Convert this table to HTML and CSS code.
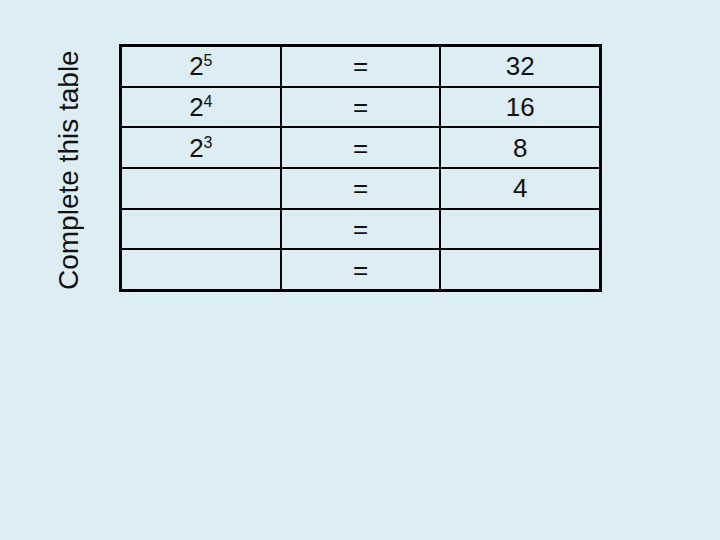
FILE: index.html
```html
<!DOCTYPE html>
<html>
<head>
<meta charset="utf-8">
<link rel="stylesheet" href="styles.css">
</head>
<body>
<div class="slide">
  <div class="label">Complete this table</div>
  <div class="grid">
    <div class="cell"><span>2<span class="sup">5</span></span></div>
    <div class="cell">=</div>
    <div class="cell">32</div>
    <div class="cell"><span>2<span class="sup">4</span></span></div>
    <div class="cell">=</div>
    <div class="cell">16</div>
    <div class="cell"><span>2<span class="sup">3</span></span></div>
    <div class="cell">=</div>
    <div class="cell">8</div>
    <div class="cell"></div>
    <div class="cell">=</div>
    <div class="cell">4</div>
    <div class="cell"></div>
    <div class="cell">=</div>
    <div class="cell"></div>
    <div class="cell"></div>
    <div class="cell">=</div>
    <div class="cell"></div>
  </div>
</div>
</body>
</html>
```

FILE: styles.css
```css
html, body {
  margin: 0;
  padding: 0;
  background: #dcedf4;
  width: 720px;
  height: 540px;
  overflow: hidden;
}
.slide {
  display: flex;
  align-items: stretch;
  padding: 44px 0 0 53px;
  font-family: "Liberation Sans", Arial, sans-serif;
  color: #111;
}
.label {
  writing-mode: vertical-rl;
  transform: rotate(180deg);
  font-size: 28px;
  line-height: 32px;
  width: 32px;
  text-align: start;
  white-space: nowrap;
  padding-top: 2px;
}
.grid {
  margin-left: 34px;
  width: 477px;
  height: 242px;
  border: 3px solid #000;
  background: #000;
  display: grid;
  grid-template-columns: repeat(3, 1fr);
  grid-template-rows: repeat(6, 1fr);
  gap: 2px;
}
.cell {
  background: #dcedf4;
  display: flex;
  align-items: center;
  justify-content: center;
  font-size: 26px;
  line-height: 30px;
}
.sup {
  font-size: 16px;
  line-height: 16px;
  vertical-align: 9px;
}
```
